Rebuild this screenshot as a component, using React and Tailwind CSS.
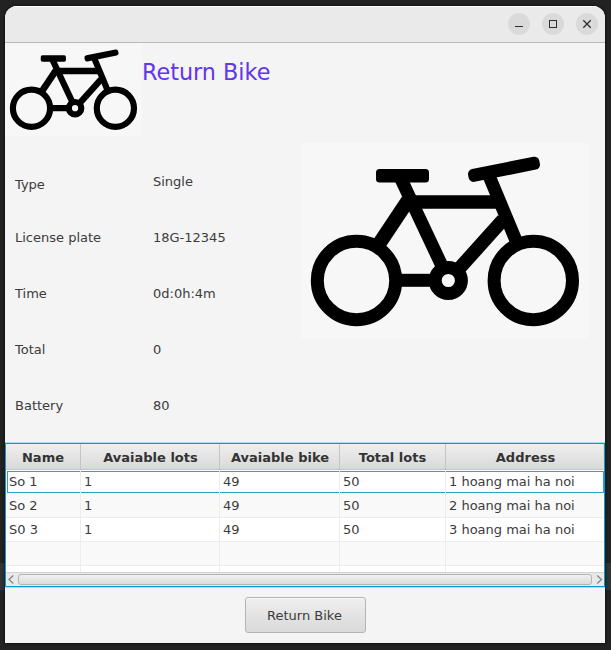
import React from "react";

const details = [
  { label: "Type", value: "Single", row: "h-[53px]", raised: true },
  { label: "License plate", value: "18G-12345", row: "h-[56px]" },
  { label: "Time", value: "0d:0h:4m", row: "h-[56px]" },
  { label: "Total", value: "0", row: "h-[56px]" },
  { label: "Battery", value: "80", row: "h-[16px]" },
];

const columns = ["Name", "Avaiable lots", "Avaiable bike", "Total lots", "Address"];

const stations = [
  ["So 1", "1", "49", "50", "1 hoang mai ha noi"],
  ["So 2", "1", "49", "50", "2 hoang mai ha noi"],
  ["S0 3", "1", "49", "50", "3 hoang mai ha noi"],
  ["", "", "", "", ""],
];

const grid = "grid grid-cols-[75px_139px_120px_106px_158px]";

function Bike({ className }) {
  return (
    <svg viewBox="0 0 288 196" className={className} fill="none" stroke="#000" strokeWidth="13">
      <circle cx="55.5" cy="137.5" r="39.2" />
      <circle cx="232.3" cy="137.5" r="39.2" />
      <circle cx="147.3" cy="137.5" r="13.1" />
      <rect x="75" y="26" width="53" height="13.4" rx="3.5" fill="#000" stroke="none" />
      <rect x="-36.3" y="-6.5" width="72.6" height="13" rx="5" fill="#000" stroke="none" transform="translate(203 26.3) rotate(-11.3)" />
      <path d="M107 59H197" strokeWidth="13.4" />
      <path d="M100 36L141 123" />
      <path d="M107 57.5L77 102.5" strokeWidth="14.2" />
      <path d="M188.5 34L216 100" />
      <path d="M202 76.8L158 125.8" strokeWidth="13.6" />
      <path d="M99 137.3H130" />
    </svg>
  );
}

function WindowButton({ children }) {
  return (
    <div className="flex size-[22px] items-center justify-center rounded-full bg-[#dadada]">
      <svg viewBox="0 0 22 22" className="size-[22px]" fill="none" stroke="#2e2e2e">
        {children}
      </svg>
    </div>
  );
}

function Station({ cells, index }) {
  if (index === 0) {
    return (
      <div className={`${grid} h-6 bg-white pt-px pb-px`}>
        {cells.map((cell, i) => (
          <div key={i} className={`flex ${i < 4 ? "border-r border-[#ededed]" : ""} ${i === 0 ? "pl-px" : ""}`}>
            <div
              className={`flex-1 border-y border-[#28a4cc] leading-[19px] ${i === 0 ? "border-l pl-px" : "pl-[3px]"} ${i === 4 ? "border-r" : ""}`}
            >
              {cell}
            </div>
          </div>
        ))}
      </div>
    );
  }
  return (
    <div className={`${grid} h-6 border-b border-[#ededed] ${index % 2 ? "bg-[#f9f9f9]" : "bg-white"}`}>
      {cells.map((cell, i) => (
        <div key={i} className={`pl-[3px] leading-[23px] ${i < 4 ? "border-r border-[#ededed]" : ""}`}>
          {cell}
        </div>
      ))}
    </div>
  );
}

export default function App() {
  return (
    <div className="h-[650px] w-[611px] bg-[linear-gradient(#222_563px,#303334_563px,#303334_590px,#222_590px)] px-[5px] pt-[6px] pr-[6px] font-['DejaVu_Sans',sans-serif] text-[13px] text-[#3b3b3b]">
      <div className="flex h-[637px] flex-col overflow-hidden rounded-t-[12px] bg-[#f4f4f4] shadow-[0_0_3px_#000]">
        <header className="flex h-[37px] shrink-0 items-start justify-end gap-3 border-t border-b border-t-white border-b-[#b9b9b9] bg-[#eaeaea] pt-[6px] pr-[7px]">
          <WindowButton>
            <path d="M7 13.5H15" />
          </WindowButton>
          <WindowButton>
            <rect x="7.5" y="7.5" width="7" height="7" />
          </WindowButton>
          <WindowButton>
            <path d="M7.3 7.3L14.7 14.7M14.7 7.3L7.3 14.7" strokeWidth="1.3" />
          </WindowButton>
        </header>

        <div className="flex h-[93px] shrink-0">
          <Bike className="h-[93px] w-[137px] bg-[#f7f7f7]" />
          <h1 className="pt-[15px] text-[22.3px] leading-[28px] text-[#6236ea]">Return Bike</h1>
        </div>

        <div className="flex h-[306px] shrink-0">
          <dl className="w-[296px] pt-[41px] pl-[10px] leading-[16px]">
            {details.map(({ label, value, row, raised }) => (
              <div key={label} className={`flex ${row}`}>
                <dt className="w-[138px]">{label}</dt>
                <dd className={raised ? "-mt-[3px]" : ""}>{value}</dd>
              </div>
            ))}
          </dl>
          <Bike className="mt-[7px] h-[196px] w-[288px] bg-[#f7f7f7]" />
        </div>

        <section className="flex h-[146px] shrink-0 flex-col border-y border-[#a9dcec]">
          <div className="flex h-[144px] flex-col border border-[#039ed3] bg-white">
            <div className={`${grid} h-[26px] shrink-0 border-b border-[#c4c4c4] bg-linear-to-b from-[#efefef] to-[#d9d9d9] font-bold text-[#333]`}>
              {columns.map((name, i) => (
                <div key={name} className={`border-r text-center leading-[27px] ${i < 4 ? "border-[#c4c4c4]" : "border-[#dedede] pl-[2px]"} ${i === 1 || i === 2 ? "pl-px" : ""}`}>
                  {name}
                </div>
              ))}
            </div>
            {stations.map((cells, i) => (
              <Station key={i} cells={cells} index={i} />
            ))}
            <div className={`${grid} h-[6px] shrink-0`}>
              {columns.slice(0, 4).map((name) => (
                <div key={name} className="border-r border-[#ededed]" />
              ))}
            </div>
            <div className="flex h-[14px] shrink-0 items-center border-t border-[#d2d2d2] bg-[#e9e9e9]">
              <svg viewBox="0 0 12 13" className="h-[13px] w-[12px]" fill="none" stroke="#858585" strokeWidth="1.3">
                <path d="M7.3 2.5L3 6.5L7.3 10.5" />
              </svg>
              <div className="h-[11px] w-[574px] rounded-[3px] border border-[#b4b4b4] bg-linear-to-b from-[#f0f0f0] to-[#dcdcdc]" />
              <svg viewBox="0 0 12 13" className="h-[13px] w-[12px]" fill="none" stroke="#858585" strokeWidth="1.3">
                <path d="M5.2 2.5L9.5 6.5L5.2 10.5" />
              </svg>
            </div>
          </div>
        </section>

        <footer className="flex justify-center pt-[9px]">
          <button className="h-[36px] w-[121px] rounded-[3px] border border-[#b4b4b4] bg-linear-to-b from-[#efefef] to-[#d9d9d9] pt-px pr-px leading-[34px] shadow-[inset_0_1px_0_#fafafa]">
            Return Bike
          </button>
        </footer>
      </div>
    </div>
  );
}
